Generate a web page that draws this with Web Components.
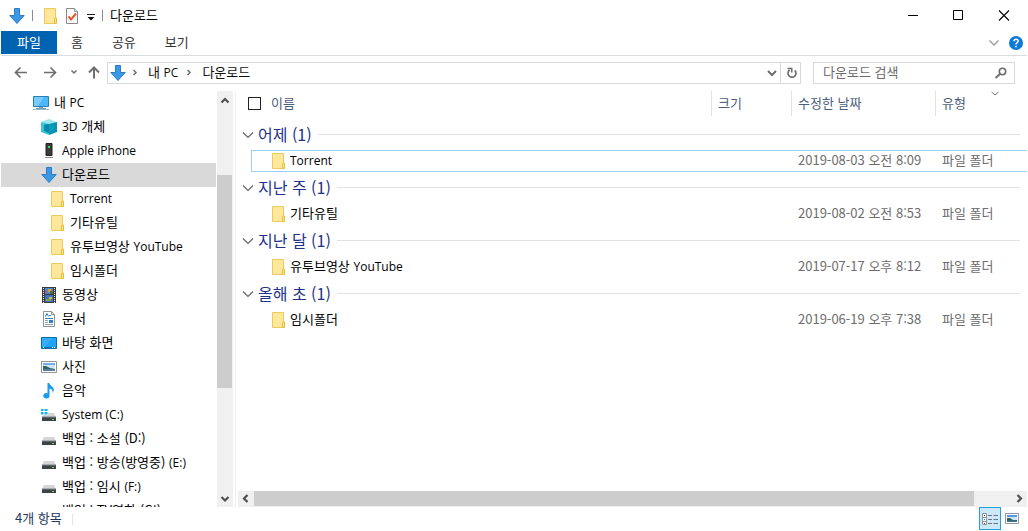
<!DOCTYPE html>
<html lang="ko">
<head>
<meta charset="utf-8">
<meta name="viewport" content="width=device-width, initial-scale=1">
<title>다운로드</title>
<style>
  html, body { margin: 0; height: 100%; }
  body {
    font-family: "Noto Sans CJK KR", "Noto Sans", sans-serif;
    font-size: 13px;
    line-height: 20px;
    color: #000;
    background: #fff;
    overflow: hidden;
  }
  :lang(en) { font-family: "Open Sans", "Noto Sans", sans-serif; font-size: 12px; }
</style>
</head>
<body>
<explorer-window>
  <title-bar slot="title">다운로드</title-bar>
  <ribbon-tabs slot="ribbon"></ribbon-tabs>
  <address-row slot="address"></address-row>
  <nav-tree slot="tree">
    <tree-item icon="pc" depth="0">내 <span lang="en">PC</span></tree-item>
    <tree-item icon="cube" depth="1"><span lang="en">3D</span> 개체</tree-item>
    <tree-item icon="phone" depth="1"><span lang="en">Apple iPhone</span></tree-item>
    <tree-item icon="down" depth="1" selected>다운로드</tree-item>
    <tree-item icon="folder" depth="2"><span lang="en">Torrent</span></tree-item>
    <tree-item icon="folder" depth="2">기타유틸</tree-item>
    <tree-item icon="folder" depth="2">유투브영상 <span lang="en">YouTube</span></tree-item>
    <tree-item icon="folder" depth="2">임시폴더</tree-item>
    <tree-item icon="video" depth="1">동영상</tree-item>
    <tree-item icon="doc" depth="1">문서</tree-item>
    <tree-item icon="desktop" depth="1">바탕 화면</tree-item>
    <tree-item icon="picture" depth="1">사진</tree-item>
    <tree-item icon="music" depth="1">음악</tree-item>
    <tree-item icon="system" depth="1"><span lang="en">System (C:)</span></tree-item>
    <tree-item icon="drive" depth="1">백업 : 소설 (D:)</tree-item>
    <tree-item icon="drive" depth="1">백업 : 방송(방영중) <span lang="en">(E:)</span></tree-item>
    <tree-item icon="drive" depth="1">백업 : 임시 <span lang="en">(F:)</span></tree-item>
    <tree-item icon="drive" depth="1">백업 : TV영화 (G:)</tree-item>
  </nav-tree>
  <file-list slot="files"></file-list>
  <status-bar slot="status">4개 항목</status-bar>
</explorer-window>

<script>
const ICONS = {
  down: `<path d="M5.5.5h5v7h4.7L8 15.5.8 7.500h4.700z" fill="#3a98e6" stroke="#2b7cc4"/>`,
  folder: `<path d="M2.500.5h11v15h-11z" fill="#ffe89b" stroke="#eccb5e"/><path d="M12.500 15.500v-4.500l1-1.500 1 .5v5.500z" fill="#ffe48a" stroke="#e5bd3c"/>`,
  check: `<path d="M2.500.5h8l3 3v12h-11z" fill="#fafafa" stroke="#8a8a8a"/><path d="M10.500.5v3h3" fill="#ddd" stroke="#999"/><path d="M4.500 8.500l2.500 3 5-6" fill="none" stroke="#e8562a" stroke-width="2"/>`,
  menu: `<path d="M1 6.500h8" stroke="#222"/><path d="M1.500 9h7L5 12.500z" fill="#111"/>`,
  pc: `<path d="M.5 1.500h15v10H.5z" fill="#4db8f5" stroke="#2a7fb8"/><path d="M1 2h10L5 11H1z" fill="#8bd4fb" opacity=".7"/><path d="M6 12h4v1H6z" fill="#8ca6b5"/><path d="M3 13h10v1H3z" fill="#6e9db8"/><path d="M0 14h16v1H0z" fill="#9dbccb"/>`,
  cube: `<path d="M0 3l8-3 8 3-8 3z" fill="#9fe6ef"/><path d="M0 3l8 2v11l-8-3z" fill="#3cc5da"/><path d="M16 3L8 5v11l8-3z" fill="#0b90ae"/><path d="M3 6l5-1 5 1v6l-5 2-5-2z" fill="#0a9dbb"/><path d="M3 6l5-1v9l-5-2z" fill="#078aa9"/>`,
  phone: `<path d="M5 .5h6v12H5z" fill="#3b3b3b" stroke="#222"/><path d="M7 3h2v2H7z" fill="#35e04a"/><path d="M4 14h8v1H4z" fill="#8a8a8a"/>`,
  video: `<path d="M1 0h14v16H1z" fill="#3a3a3a"/><path d="M4 1h8v6H4z" fill="#5b83c9"/><path d="M4 8h8v7H4z" fill="#3c73c4"/><path d="M2.500 1v15M13.500 1v15" stroke="#eee" stroke-dasharray="1 1"/><path d="M7 2h3v3H7z" fill="#c9a83a"/><path d="M9 4h3v3H9z" fill="#55702d"/><path d="M4 4h3v2H4z" fill="#9364a8"/><path d="M8 10h3v2H8z" fill="#d9bb2c"/><path d="M5 12h5v2H5z" fill="#8c9c38"/>`,
  doc: `<path d="M2.500.5h8l3 3v12h-11z" fill="#fcfcfc" stroke="#8d9298"/><path d="M10.500.5v3h3" fill="none" stroke="#8d9298"/><path d="M4.500 5.500L6 2.500l1.500 3M8 4.500h2M4 7.500h8" stroke="#3383c8" fill="none"/><path d="M4 9.500h3M4 11.500h3M4 13.500h8" stroke="#9aa5b0"/><path d="M8 9h4v3H8z" fill="#2f80b7"/>`,
  desktop: `<path d="M.5 2.500h15v11H.5z" fill="#1fa2fb" stroke="#0b6cab"/><path d="M1 3h11L4 12H1z" fill="#4bb6fd" opacity=".5"/><path d="M1 12h14v1H1z" fill="#1378bd"/><path d="M2 12h1v1H2zM11 12h1v1h-1zM13 12h1v1h-1z" fill="#fff"/>`,
  picture: `<path d="M.5 2.500h15v11H.5z" fill="#fff" stroke="#909599"/><path d="M2 4h12v8H2z" fill="#cfe6f8"/><path d="M2 4h12v2H2z" fill="#78aee6"/><path d="M2 7l3 0 4 2 5 1H2z" fill="#34655c"/><path d="M2 10h12v2H2z" fill="#567f9e"/>`,
  music: `<path d="M6.500 0h1.800c.5 3 4.500 3.300 4.500 6.700 0 1.300-.6 2.300-1.200 3.300.4-2.500-.8-4-3.100-4.600v7.400a3.100 2.700 0 1 1-2-2.600z" fill="#1b9bf0"/>`,
  drive: `<path d="M3 6h10l2 4H1z" fill="#d3d5d7"/><path d="M1 10h14v4H1z" fill="#3e4348"/><path d="M1 9.500h14v1H1z" fill="#7e8387"/><path d="M11 12h2v1h-2z" fill="#56e34e"/>`,
  system: `<path d="M3 6h10l2 4H1z" fill="#d3d5d7"/><path d="M1 10h14v4H1z" fill="#3e4348"/><path d="M1 9.500h14v1H1z" fill="#7e8387"/><path d="M11 12h2v1h-2z" fill="#56e34e"/><path d="M0 1h7v7H0z" fill="#fff"/><path d="M0 2h2.500v2H0zM3.500 2h3v2h-3zM0 5h2.500v2.500H0zM3.500 5h3v2.500h-3z" fill="#10b2ee"/>`,
  minimize: `<path d="M4 7.500h10" stroke="#000"/>`,
  maximize: `<path d="M3.500 2.500h9v9h-9z" fill="none" stroke="#000"/>`,
  close: `<path d="M3 2.500l10 10M13 2.500l-10 10" stroke="#000" stroke-width="1.100"/>`,
  chevron: `<path d="M3.500 5.500L8 10l4.500-4.500" fill="none" stroke="currentColor" stroke-width="1.300"/>`,
  group: `<path d="M3 5.500l5 5 5-5" fill="none" stroke="currentColor" stroke-width="1.200"/>`,
  bold: `<path d="M4 6l4 4 4-4" fill="none" stroke="currentColor" stroke-width="2"/>`,
  small: `<path d="M5.500 5.500L8 8l2.500-2.500" fill="none" stroke="currentColor" stroke-width="1.500"/>`,
  sort: `<path d="M4.500 6L8 9l3.500-3" fill="none" stroke="currentColor"/>`,
  crumb: `<path d="M6.500 5L9 7.500 6.500 10" fill="none" stroke="currentColor" stroke-width="1.500"/>`,
  back: `<path d="M14 7.500H3M7.500 2.500l-5 5 5 5" fill="none" stroke="currentColor" stroke-width="1.700"/>`,
  forward: `<path d="M2 7.500h11M8.500 2.500l5 5-5 5" fill="none" stroke="currentColor" stroke-width="1.700"/>`,
  up: `<path d="M8 13.500v-11M3 7.500l5-5 5 5" fill="none" stroke="currentColor" stroke-width="2"/>`,
  refresh: `<path d="M6.500 5A4 4 0 1 0 11.800 5.300" fill="none" stroke="currentColor" stroke-width="1.700"/><path d="M4.500 3.500h4.300v4" fill="none" stroke="currentColor" stroke-width="1.500"/>`,
  search: `<circle cx="9.500" cy="6.500" r="3.200" fill="none" stroke="currentColor" stroke-width="1.600"/><path d="M7 9l-4.500 4" stroke="currentColor" stroke-width="2"/>`,
  help: `<circle cx="8" cy="8" r="7" fill="#0d7ad8"/><path d="M6 6.300c0-2.700 4.200-2.700 4.200-.2C10.200 7.700 8 7.700 8 9.500M8 10.800v1.400" fill="none" stroke="#fff" stroke-width="1.500"/>`,
  arrowUp: `<path d="M4.500 10.500L8 7l3.500 3.500" fill="none" stroke="#505050" stroke-width="2.200"/>`,
  arrowDown: `<path d="M4.500 6L8 9.500 11.500 6" fill="none" stroke="#505050" stroke-width="2.200"/>`,
  arrowLeft: `<path d="M9.500 4L6 7.500 9.500 11" fill="none" stroke="#505050" stroke-width="2.200"/>`,
  arrowRight: `<path d="M6.500 4L10 7.500 6.500 11" fill="none" stroke="#505050" stroke-width="2.200"/>`,
  details: `<path d="M.5 2.500h4v11h-4zM.5 6.500h4M.5 10.500h4" fill="#fff" stroke="#8f9599"/><path d="M2 4h1v1H2z" fill="#333"/><path d="M2 8h1v1H2z" fill="#2b7de0"/><path d="M2 12h1v1H2z" fill="#d22"/><path d="M6 4.500h4M11.500 4.500H16M6 8.500h4M11.500 8.500H16M6 12.500h4M11.500 12.500H16" stroke="#6f767b"/>`,
  thumbs: `<path d="M1.500 2.500h13v10h-13z" fill="#fff" stroke="#8f9599"/><path d="M3 4h10v7H3z" fill="#cfe6f8"/><path d="M3 4h10v2H3z" fill="#5a95e8"/><path d="M3 7l3 0 3 2h4v1H3z" fill="#2f6350"/><path d="M3 9.500h10V11H3z" fill="#3c729a"/>`
};

/* Registers an element whose shadow root is cloned from a template. */
function define(name, html, setup) {
  const template = document.createElement('template');
  template.innerHTML = html;
  customElements.define(name, class extends HTMLElement {
    connectedCallback() {
      if (this.shadowRoot) return;
      this.attachShadow({ mode: 'open' }).append(template.content.cloneNode(true));
      if (setup) setup(this, this.shadowRoot);
    }
  });
}

/* Shared by all components; .label lifts text to the optical centre of its row. */
const RESET = `
  * { box-sizing: border-box; }
  button { display: flex; align-items: center; justify-content: center; margin: 0; padding: 0;
    border: 0; background: none; font: inherit; color: inherit; }
  a { color: inherit; text-decoration: none; }
  .label { padding-bottom: 2px; }
  :lang(en) { font-family: "Open Sans", "Noto Sans", sans-serif; font-size: 12px; }
`;

define('x-icon', `
  <style>
    :host { display: block; flex: none; width: 16px; height: 16px; }
    svg { display: block; }
  </style>
  <svg width="16" height="16" viewBox="0 0 16 16" aria-hidden="true"></svg>`,
  (host, root) => { root.querySelector('svg').innerHTML = ICONS[host.getAttribute('name')]; });

define('explorer-window', `
  <style>${RESET}
    :host { display: flex; flex-direction: column; box-sizing: border-box; height: 100vh; padding: 0 1px; }
    .body { flex: 1; min-height: 0; display: grid; grid-template-columns: 235px minmax(0, 1fr); }
  </style>
  <slot name="title"></slot>
  <slot name="ribbon"></slot>
  <slot name="address"></slot>
  <div class="body"><slot name="tree"></slot><slot name="files"></slot></div>
  <slot name="status"></slot>`);

define('title-bar', `
  <style>${RESET}
    :host { display: flex; align-items: center; height: 31px; padding-left: 8px; }
    .rule { width: 1px; height: 11px; background: #8c8c8c; }
    .rule.first { margin-left: 7px; }
    .quick { display: flex; margin-left: 9px; }
    .quick button { width: 22px; justify-content: flex-start; }
    .quick .menu { width: 16px; }
    .title { flex: 1; margin-left: 7px; }
    .caption { display: flex; align-self: stretch; }
    .caption button { width: 46px; }
  </style>
  <x-icon name="down"></x-icon>
  <span class="rule first"></span>
  <div class="quick">
    <button aria-label="새 폴더"><x-icon name="folder"></x-icon></button>
    <button aria-label="속성"><x-icon name="check"></x-icon></button>
    <button class="menu" aria-label="빠른 실행 도구 모음"><x-icon name="menu"></x-icon></button>
  </div>
  <span class="rule"></span>
  <span class="title label"><slot></slot></span>
  <div class="caption">
    <button aria-label="최소화"><x-icon name="minimize"></x-icon></button>
    <button aria-label="최대화"><x-icon name="maximize"></x-icon></button>
    <button aria-label="닫기"><x-icon name="close"></x-icon></button>
  </div>`);

define('ribbon-tabs', `
  <style>${RESET}
    :host { display: flex; height: 25px; box-sizing: border-box; border-bottom: 1px solid #dadbdc; color: #333; }
    nav { display: flex; flex: 1; height: 23px; }
    nav button { padding: 0 14px 2px; }
    nav button + button + button { margin-left: 1px; }
    nav .file { padding: 0 16px 2px; background: #0063b1; color: #fff; }
    .tools { display: flex; align-items: center; gap: 6px; padding-right: 3px; color: #999; }
  </style>
  <nav>
    <button class="file">파일</button><button>홈</button><button>공유</button><button>보기</button>
  </nav>
  <div class="tools">
    <button aria-label="리본 최소화"><x-icon name="chevron"></x-icon></button>
    <button aria-label="도움말"><x-icon name="help"></x-icon></button>
  </div>`);

define('address-row', `
  <style>${RESET}
    :host { display: flex; align-items: center; gap: 12px; height: 35px; padding: 0 12px 1px; color: #6e6e6e;
      box-sizing: border-box; }
    nav { display: flex; align-items: center; margin-right: -7px; }
    nav button + button { margin-left: 13px; }
    nav button.recent { margin-left: 8px; }
    nav button.parent { margin-left: 4px; }
    .box { display: flex; align-items: center; height: 22px; border: 1px solid #d9d9d9; }
    .path { flex: 1; min-width: 0; padding-left: 2px; }
    .path a { color: #111; margin: 0 3px 0 5px; }
    .path x-icon + x-icon { margin-left: 1px; }
    .space { flex: 1; }
    .refresh { width: 20px; height: 20px; border-left: 1px solid #d9d9d9; }
    .search { width: 202px; padding: 0 5px 0 9px; }
    input { flex: 1; min-width: 0; height: 20px; padding: 0 0 2px; border: 0; outline: 0; background: none;
      font: inherit; color: #000; }
    input::placeholder { color: #6d6d6d; opacity: 1; }
  </style>
  <nav>
    <button aria-label="뒤로"><x-icon name="back"></x-icon></button>
    <button aria-label="앞으로"><x-icon name="forward"></x-icon></button>
    <button class="recent" aria-label="최근 위치"><x-icon name="small"></x-icon></button>
    <button class="parent" aria-label="위로"><x-icon name="up"></x-icon></button>
  </nav>
  <div class="box path">
    <x-icon name="down"></x-icon>
    <x-icon name="crumb"></x-icon><a class="label" href="#pc">내 <span lang="en">PC</span></a>
    <x-icon name="crumb"></x-icon><a class="label" href="#downloads">다운로드</a>
    <span class="space"></span>
    <button aria-label="이전 위치"><x-icon name="bold"></x-icon></button>
    <button class="refresh" aria-label="새로 고침"><x-icon name="refresh"></x-icon></button>
  </div>
  <div class="box search">
    <input type="text" placeholder="다운로드 검색" aria-label="다운로드 검색">
    <button aria-label="검색"><x-icon name="search"></x-icon></button>
  </div>`);

define('nav-tree', `
  <style>${RESET}
    :host { display: flex; min-height: 0; border-right: 1px solid #f0f0f0; box-sizing: border-box; }
    .items { flex: 1; min-width: 0; overflow: hidden; }
    .bar { display: flex; flex-direction: column; width: 16px; margin: 0 2px 0 1px; background: #f0f0f0; }
    .track { flex: 1; display: grid; grid-template-rows: 67fr 214fr 102fr; }
    .thumb { grid-row: 2; width: 15px; background: #cdcdcd; }
    .bar button { width: 15px; height: 17px; }
  </style>
  <div class="items"><slot></slot></div>
  <div class="bar">
    <button aria-label="위로 스크롤"><x-icon name="arrowUp"></x-icon></button>
    <div class="track"><div class="thumb"></div></div>
    <button aria-label="아래로 스크롤"><x-icon name="arrowDown"></x-icon></button>
  </div>`);

define('tree-item', `
  <style>${RESET}
    :host { display: block; }
    :host([selected]) { background: #d9d9d9; }
    a { display: flex; align-items: center; gap: 5px; height: 24px; padding-left: 32px; white-space: nowrap; }
    :host([depth="1"]) a { padding-left: 40px; }
    :host([depth="2"]) a { padding-left: 48px; }
  </style>
  <a href="#item"><x-icon></x-icon><span class="label"><slot></slot></span></a>`,
  (host, root) => {
    const icon = document.createElement('x-icon');
    icon.setAttribute('name', host.getAttribute('icon'));
    root.querySelector('x-icon').replaceWith(icon);
  });

const GROUPS = [
  ['어제 (1)', '<span lang="en">Torrent</span>', '2019-08-03 오전 8:09'],
  ['지난 주 (1)', '기타유틸', '2019-08-02 오전 8:53'],
  ['지난 달 (1)', '유투브영상 <span lang="en">YouTube</span>', '2019-07-17 오후 8:12'],
  ['올해 초 (1)', '임시폴더', '2019-06-19 오후 7:38']
];

define('file-list', `
  <style>${RESET}
    :host { display: flex; flex-direction: column; min-width: 0; min-height: 0; }
    .view { flex: 1; min-height: 0; overflow: hidden; }
    table { width: 100%; table-layout: fixed; border-collapse: separate; border-spacing: 0; }
    th, td { padding: 0; text-align: left; font-weight: 400; white-space: nowrap; }
    .gutter { width: 15px; } .size { width: 80px; } .date { width: 144px; } .type { width: 92px; }
    thead th { height: 28px; vertical-align: top; color: #4c607a; position: relative; }
    thead div { display: flex; align-items: center; height: 25px; padding-left: 6px; border-left: 1px solid #e2e2e2; }
    thead th:first-child div { padding-left: 12px; border: 0; gap: 10px; }
    thead x-icon { position: absolute; top: -5px; left: 52px; color: #777; }
    input { appearance: none; width: 13px; height: 13px; margin: 0; border: 1px solid #222; background: #fff; }
    .group { display: flex; align-items: center; height: 31px; padding: 0 7px 0 4px; color: #1e3287;
      font-size: 16px; line-height: 24px; }
    .group x-icon { color: #666; margin-right: 2px; }
    .group::after { content: ""; flex: 1; height: 1px; margin-left: 6px; background: #e2e2e2; }
    .row td { height: 22px; padding-left: 7px; color: #6d6d6d; border: solid transparent; border-width: 1px 0;
      line-height: 18px; }
    .row .meta { display: block; height: 20px; }
    .row td:first-child { padding: 0; border: 0; }
    .row td:nth-child(2) { padding-left: 18px; color: #000; border-left-width: 1px; }
    .focus td:not(:first-child) { border-color: #99d1ff; }
    .name { display: flex; align-items: center; gap: 4px; height: 20px; }
    .name .label { height: 20px; }
    .bar { display: flex; height: 16px; margin-left: 2px; background: #f0f0f0; }
    .bar button { width: 16px; }
    .track { flex: 1; display: grid; grid-template-columns: 720fr 37fr; }
    .thumb { height: 15px; background: #cdcdcd; }
  </style>
  <div class="view">
    <table>
      <colgroup><col class="gutter"><col><col class="size"><col class="date"><col class="type"></colgroup>
      <thead><tr>
        <th colspan="2"><div><input type="checkbox" id="all" aria-label="모두 선택"><label class="label" for="all">이름</label></div></th>
        <th><div><span class="label">크기</span></div></th>
        <th><div><span class="label">수정한 날짜</span></div></th>
        <th><div><span class="label">유형</span></div><x-icon name="sort"></x-icon></th>
      </tr></thead>
      <tbody></tbody>
    </table>
  </div>
  <div class="bar">
    <button aria-label="왼쪽으로 스크롤"><x-icon name="arrowLeft"></x-icon></button>
    <div class="track"><div class="thumb"></div></div>
    <button aria-label="오른쪽으로 스크롤"><x-icon name="arrowRight"></x-icon></button>
  </div>`,
  (host, root) => {
    root.querySelector('tbody').innerHTML = GROUPS.map(([group, name, date], i) => `
      <tr><th colspan="5"><div class="group"><x-icon name="group"></x-icon><span class="label">${group}</span></div></th></tr>
      <tr class="row${i ? '' : ' focus'}"><td></td>
        <td><div class="name"><x-icon name="folder"></x-icon><span class="label">${name}</span></div></td>
        <td></td><td><span class="meta">${date}</span></td><td><span class="meta">파일 폴더</span></td></tr>`).join('');
  });

define('status-bar', `
  <style>${RESET}
    :host { display: flex; align-items: center; height: 24px; padding: 0 4px 0 14px; color: #1e395b; }
    .count { flex: 1; display: flex; align-items: center; gap: 10px; }
    .count::after { content: ""; width: 1px; height: 11px; background: #e6e6e6; }
    button { width: 22px; height: 23px; align-self: flex-start; border: 1px solid transparent; }
    button[aria-pressed="true"] { border-color: #26a0da; background: #cce8f6; }
  </style>
  <span class="count"><span class="label"><slot></slot></span></span>
  <button aria-label="자세히" aria-pressed="true"><x-icon name="details"></x-icon></button>
  <button aria-label="큰 아이콘" aria-pressed="false"><x-icon name="thumbs"></x-icon></button>`);
</script>
</body>
</html>
